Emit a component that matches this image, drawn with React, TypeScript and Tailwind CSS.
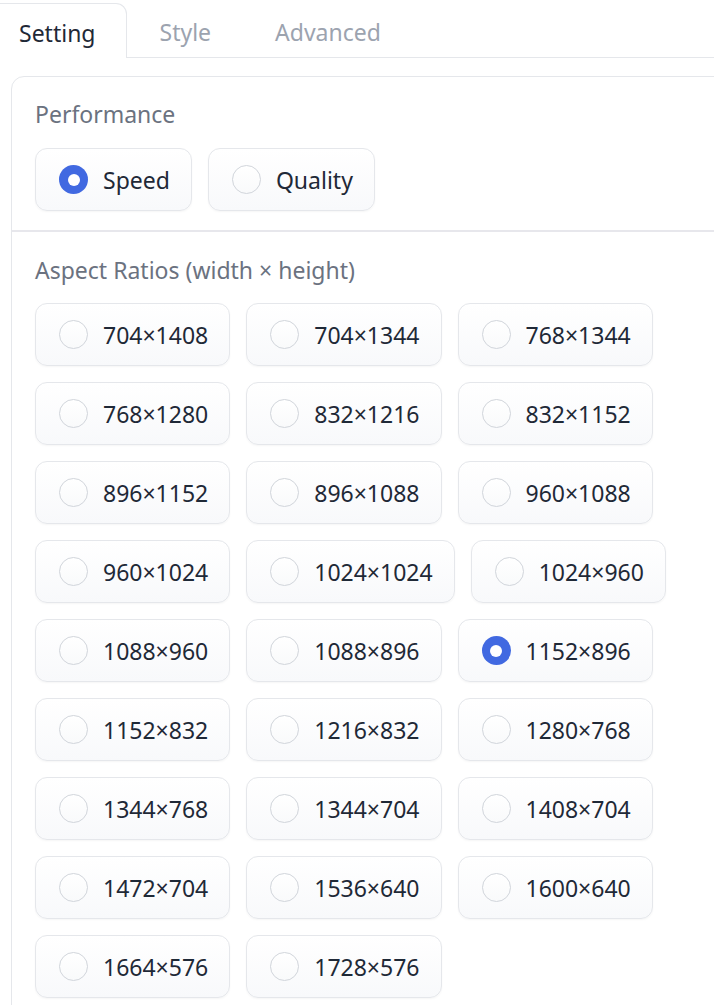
import { useState } from "react";

const ratios = [
  "704×1408", "704×1344", "768×1344", "768×1280", "832×1216", "832×1152",
  "896×1152", "896×1088", "960×1088", "960×1024", "1024×1024", "1024×960",
  "1088×960", "1088×896", "1152×896", "1152×832", "1216×832", "1280×768",
  "1344×768", "1344×704", "1408×704", "1472×704", "1536×640", "1600×640",
  "1664×576", "1728×576",
];

function Radio({ label, checked, onClick }: { label: string; checked: boolean; onClick: () => void }) {
  return (
    <button
      onClick={onClick}
      className="flex items-center gap-[15px] h-[63px] pl-[23px] pr-[21px] rounded-[12px] border border-[#e5e7eb] bg-gradient-to-b from-white to-[#f8f9fb] shadow-[0_1px_2px_rgba(0,0,0,0.04)] text-[#1f2937]"
    >
      {checked ? (
        <span className="w-[29px] h-[29px] rounded-full bg-[#4169e1] flex items-center justify-center">
          <span className="w-[12px] h-[12px] rounded-full bg-white" />
        </span>
      ) : (
        <span className="w-[29px] h-[29px] rounded-full border border-[#d1d5db] bg-gradient-to-b from-white to-[#f9fafb]" />
      )}
      <span className="leading-[30px]">{label}</span>
    </button>
  );
}

export default function App() {
  const [perf, setPerf] = useState("Speed");
  const [ratio, setRatio] = useState("1152×896");

  return (
    <div
      className="w-[714px] h-[1005px] overflow-hidden bg-white text-[23px]"
      style={{ fontFamily: '"Noto Sans", sans-serif' }}
    >
      <div className="flex items-end mt-[3px] ml-[-12px]">
        <div className="h-[55px] pt-[4px] px-[30px] flex items-center border border-b-0 border-[#e5e7eb] rounded-t-[11px] text-[#1f2937]">
          Setting
        </div>
        <div className="h-[55px] pt-[4px] px-[33px] flex items-center border-b border-[#e5e7eb] text-[#9ca3af]">
          Style
        </div>
        <div className="h-[55px] pt-[4px] px-[31px] flex items-center border-b border-[#e5e7eb] text-[#9ca3af]">
          Advanced
        </div>
        <div className="flex-1 h-[55px] border-b border-[#e5e7eb]" />
      </div>

      <div className="mt-[18px] ml-[11px] w-[780px] border border-[#e5e7eb] rounded-tl-[13px]">
        <div className="px-[23px] pt-[22px] pb-[19px]">
          <div className="leading-[30px] text-[#6b7280] mb-[19px]">Performance</div>
          <div className="flex gap-[16px]">
            {["Speed", "Quality"].map((p) => (
              <Radio key={p} label={p} checked={perf === p} onClick={() => setPerf(p)} />
            ))}
          </div>
        </div>
        <div className="h-[2px] bg-[#e7e7ec]" />
        <div className="pl-[23px] pr-[60px] pt-[23px] pb-[20px]">
          <div className="leading-[30px] text-[#6b7280] mb-[18px]">Aspect Ratios (width × height)</div>
          <div className="flex flex-wrap gap-[16px]">
            {ratios.map((r) => (
              <Radio key={r} label={r} checked={ratio === r} onClick={() => setRatio(r)} />
            ))}
          </div>
        </div>
      </div>
    </div>
  );
}
